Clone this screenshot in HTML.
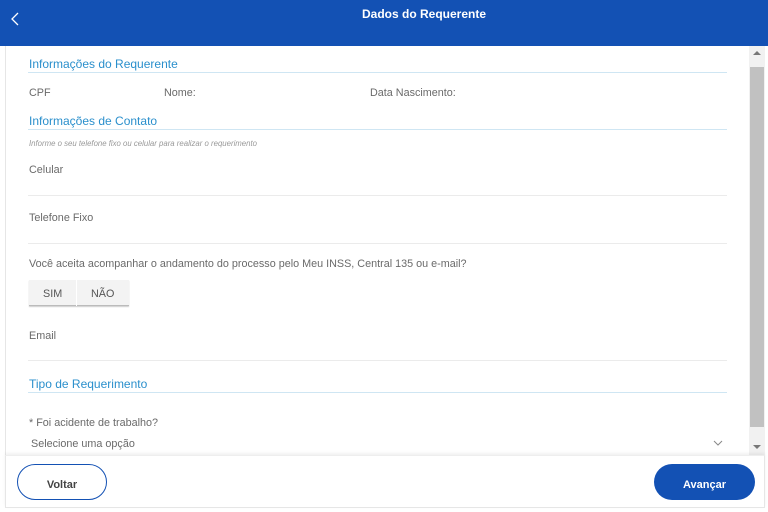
<!DOCTYPE html>
<html><head><meta charset="utf-8"><style>
*{margin:0;padding:0;box-sizing:border-box}
body{width:768px;height:512px;overflow:hidden;background:#fff;font-family:"Liberation Sans",sans-serif;position:relative;color:#555}
.a{position:absolute;white-space:nowrap}
.hdr{left:0;top:0;width:768px;height:46px;background:#1351b4}
.sec{color:#2a8fcc;font-size:12px}
.ln{position:absolute;left:28px;width:699px;height:1px}
.lb{background:#cfe6f3}
.lg{background:#ebebeb}
.t{font-size:10.8px;color:#6a6a6a}
</style></head><body>
<div class="a hdr"></div>
<svg class="a" style="left:9px;top:11px" width="12" height="16"><path d="M9 2 L3 8 L9 14" stroke="#fff" stroke-width="1.3" fill="none"/></svg>
<div class="a" style="left:0;width:848px;top:7px;text-align:center;color:#fff;font-weight:bold;font-size:12px">Dados do Requerente</div>
<div class="a" style="left:5px;top:46px;width:1px;height:410px;background:#e6e6e6"></div>
<div class="a sec" style="left:29px;top:57px">Informações do Requerente</div>
<div class="ln lb" style="top:72px"></div>
<div class="a t" style="left:29px;top:87px">CPF</div>
<div class="a t" style="left:164px;top:87px">Nome:</div>
<div class="a t" style="left:370px;top:87px">Data Nascimento:</div>
<div class="a sec" style="left:29px;top:114px">Informações de Contato</div>
<div class="ln lb" style="top:129px"></div>
<div class="a" style="left:29px;top:139px;font-size:7.8px;font-style:italic;color:#999">Informe o seu telefone fixo ou celular para realizar o requerimento</div>
<div class="a t" style="left:29px;top:164px">Celular</div>
<div class="ln lg" style="top:195px"></div>
<div class="a t" style="left:29px;top:212px">Telefone Fixo</div>
<div class="ln lg" style="top:243px"></div>
<div class="a t" style="left:29px;top:258px">Você aceita acompanhar o andamento do processo pelo Meu INSS, Central 135 ou e-mail?</div>
<div class="a" style="left:29px;top:280px;width:100px;height:26px;background:#f3f3f3;border-bottom:1px solid #bbb;box-shadow:0 1px 1px #ccc"></div>
<div class="a" style="left:76px;top:280px;width:1px;height:26px;background:#fff"></div>
<div class="a t" style="left:43px;top:288px;color:#555">SIM</div>
<div class="a t" style="left:91px;top:288px;color:#555">NÃO</div>
<div class="a t" style="left:29px;top:330px">Email</div>
<div class="ln lg" style="top:360px"></div>
<div class="a sec" style="left:29px;top:377px">Tipo de Requerimento</div>
<div class="ln lb" style="top:392px"></div>
<div class="a t" style="left:29px;top:417px">* Foi acidente de trabalho?</div>
<div class="a t" style="left:31px;top:438px">Selecione uma opção</div>
<svg class="a" style="left:713px;top:440px" width="10" height="6"><path d="M1 1 L5 5 L9 1" stroke="#888" fill="none"/></svg>
<div class="a" style="left:749px;top:46px;width:16px;height:409px;background:#f1f1f1"></div>
<div class="a" style="left:750px;top:67px;width:14px;height:360px;background:#c1c1c1"></div>
<svg class="a" style="left:752px;top:49px" width="10" height="8"><path d="M1 6 L5 2 L9 6Z" fill="#777"/></svg>
<svg class="a" style="left:752px;top:443px" width="10" height="8"><path d="M1 2 L5 6 L9 2Z" fill="#777"/></svg>
<div class="a" style="left:5px;top:455px;width:760px;height:53px;border:1px solid #e6e6e6;border-top:1px solid #eee;box-shadow:0 -2px 3px rgba(0,0,0,.06)"></div>
<div class="a" style="left:17px;top:464px;width:90px;height:36px;border:1px solid #1351b4;border-radius:18px;text-align:center;line-height:40px;font-size:11px;font-weight:bold;color:#444">Voltar</div>
<div class="a" style="left:654px;top:464px;width:101px;height:36px;background:#1351b4;border-radius:18px;text-align:center;line-height:42px;font-size:11px;font-weight:bold;color:#fff">Avançar</div>
</body></html>
